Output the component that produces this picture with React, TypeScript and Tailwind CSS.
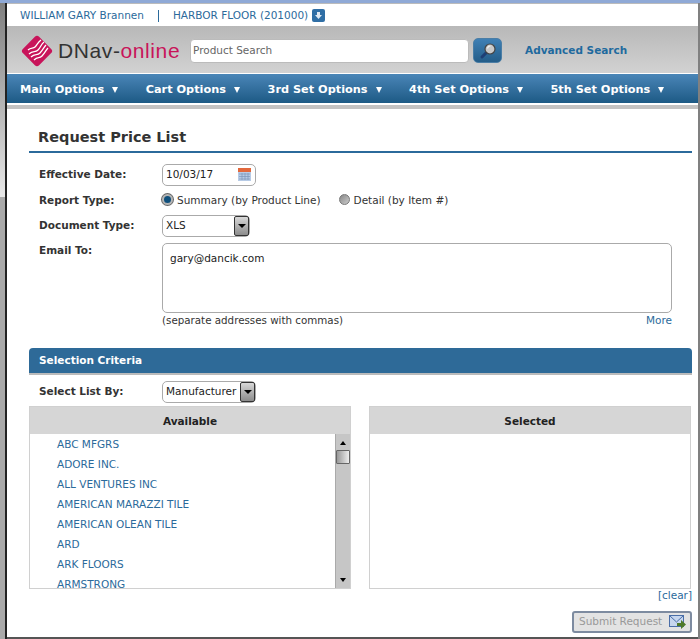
import React from "react";

const font = { fontFamily: '"DejaVu Sans", Verdana, sans-serif' };

function Caret() {
  return <span className="ml-[8px] inline-block w-0 h-0 border-l-[3px] border-r-[3px] border-t-[6px] border-l-transparent border-r-transparent border-t-white" />;
}

function SelectArrow() {
  return (
    <span className="w-[15px] h-[20px] flex items-center justify-center border border-[#333] rounded-[2px] bg-gradient-to-b from-[#d8d8d8] to-[#8c8c8c]">
      <span className="w-0 h-0 border-l-[4px] border-r-[4px] border-t-[4px] border-l-transparent border-r-transparent border-t-black" />
    </span>
  );
}

const names = ["ABC MFGRS", "ADORE INC.", "ALL VENTURES INC", "AMERICAN MARAZZI TILE", "AMERICAN OLEAN TILE", "ARD", "ARK FLOORS", "ARMSTRONG"];

export default function App() {
  return (
    <div style={font} className="w-[700px] h-[639px] overflow-hidden bg-white flex flex-col text-[10.5px] text-[#333]">
      <div className="h-[3px] shrink-0 bg-[#8fa9d6]" />
      <div className="flex-1 flex min-h-0">
        <div className="w-[7px] shrink-0 flex">
          <div className="w-[5px] flex flex-col">
            <div className="h-[194px] bg-gradient-to-b from-[#808080] to-[#e8e8e8]" />
            <div className="flex-1 bg-[#a9a9a9]" />
          </div>
          <div className="w-[2px] bg-[#222]" />
        </div>
        <div className="flex-1 min-w-0 flex flex-col">
          <div className="h-px shrink-0 bg-[#bbb]" />
          <div className="h-[22px] shrink-0 flex items-center pl-[13px] pt-[1px] text-[#2b6a9b] whitespace-nowrap">
            <span>WILLIAM GARY Brannen</span>
            <span className="w-px h-[12px] bg-[#2b6a9b] mx-[14px]" />
            <span>HARBOR FLOOR (201000)</span>
            <span className="ml-[4px] w-[13px] h-[13px] rounded-[2px] bg-[#2f6ea5] flex items-center justify-center">
              <svg width="9" height="9" viewBox="0 0 9 9"><path d="M3 1h3v3h2L4.500 8 1 4h2z" fill="#dfe9f3" /></svg>
            </span>
          </div>
          <div className="h-[47px] shrink-0 bg-gradient-to-b from-[#b8b8b8] to-[#d2d2d2] flex items-center pl-[13px] pt-[2px]">
            <svg width="34" height="34" viewBox="0 0 34 34" className="shrink-0">
              <defs>
                <clipPath id="logo-diamond">
                  <rect x="5.500" y="5.500" width="23" height="23" rx="3" transform="rotate(45 17 17)" />
                </clipPath>
              </defs>
              <rect x="5.500" y="5.500" width="23" height="23" rx="3" transform="rotate(45 17 17)" fill="#c8145a" />
              <g clipPath="url(#logo-diamond)" stroke="#fff" strokeWidth="1.300" fill="none">
                <path d="M8 16c3-3 5-1 7-3s3-5 6-7" />
                <path d="M9 20c4-4 6-1 9-4s3-6 6-8" />
                <path d="M11 23c4-4 6-1 9-4s4-6 6-8" />
                <path d="M14 26c4-4 5-1 8-4s4-6 6-8" />
              </g>
            </svg>
            <div className="ml-[4px] w-[129px] text-[21px] tracking-[0.6px] whitespace-nowrap" style={{ fontFamily: '"Liberation Sans", sans-serif' }}>
              <span className="text-[#333]">DNav-</span><span className="text-[#c8145a]">online</span>
            </div>
            <div className="ml-[3px] w-[279px] h-[24px] bg-white rounded-[4px] border border-[#bbb] flex items-center pl-[2px] text-[#666]">Product Search</div>
            <button className="ml-[4px] w-[29px] h-[25px] rounded-[5px] bg-gradient-to-b from-[#3f80b5] to-[#245d89] border border-[#4b7ea6] flex items-center justify-center">
              <svg width="20" height="20" viewBox="0 0 20 20">
                <path d="M8.500 11.500L4 16" stroke="#1d3f75" strokeWidth="3" strokeLinecap="round" />
                <circle cx="12" cy="8" r="5" fill="#c9c9c9" stroke="#444" strokeWidth="1.200" />
                <path d="M9.500 7.500a3 3 0 0 1 3-2.500" stroke="#f2f2f2" strokeWidth="1.200" fill="none" />
              </svg>
            </button>
            <span className="ml-[23px] font-bold text-[#1f6a9e]">Advanced Search</span>
          </div>
          <div className="h-px shrink-0 bg-white" />
          <div className="h-[29px] shrink-0 bg-gradient-to-b from-[#4a86b8] to-[#1c5a85] flex items-center pl-[13px] pt-[3px] text-white font-bold text-[11.3px] gap-[27.500px] whitespace-nowrap">
            <span className="flex items-center">Main Options<Caret /></span>
            <span className="flex items-center">Cart Options<Caret /></span>
            <span className="flex items-center">3rd Set Options<Caret /></span>
            <span className="flex items-center">4th Set Options<Caret /></span>
            <span className="flex items-center">5th Set Options<Caret /></span>
          </div>
          <div className="h-[2px] shrink-0 bg-white" />
          <div className="h-[4px] shrink-0 bg-[#c2c2c2]" />

          <div className="flex-1 min-h-0 pl-[22px] pr-[6px] flex flex-col">
            <h1 className="mt-[18px] h-[25px] pl-[9px] text-[14.5px] leading-[20px] font-bold text-[#333]">Request Price List</h1>
            <div className="h-[2px] bg-[#2b6a9b] -mt-[1px]" />
            <div className="mt-[10px] flex items-center h-[23px]">
              <label className="w-[133px] pl-[10px] font-bold">Effective Date:</label>
              <div className="w-[94px] h-[22px] border border-[#aaa] rounded-[5px] flex items-center justify-between pl-[3px] pr-[4px]">
                <span className="text-[#222]">10/03/17</span>
                <svg width="13" height="13" viewBox="0 0 13 13"><rect width="13" height="13" fill="#b7cbe6" /><rect width="13" height="4" fill="#e2683c" /><path d="M1 6h11M1 8.500h11M1 11h11M4 5v7M7 5v7M10 5v7" stroke="#7d96b8" strokeWidth="0.700" /></svg>
              </div>
            </div>
            <div className="mt-[5px] flex items-center h-[19px]">
              <label className="w-[133px] pl-[10px] font-bold">Report Type:</label>
              <span className="w-[11px] h-[11px] rounded-full bg-[#0f4f7c] border-2 border-[#b5b5b5] -mt-[2px] ring-1 ring-[#666]" />
              <span className="ml-[4px]">Summary (by Product Line)</span>
              <span className="ml-[18px] w-[11px] h-[11px] rounded-full bg-gradient-to-br from-[#888] to-[#ccc] border border-[#777] -mt-[2px]" />
              <span className="ml-[4px]">Detail (by Item #)</span>
            </div>
            <div className="mt-[5px] flex items-center h-[22px]">
              <label className="w-[133px] pl-[10px] font-bold">Document Type:</label>
              <div className="w-[88px] h-[22px] border border-[#aaa] rounded-[5px] flex items-center justify-between pl-[3px]">
                <span className="text-[#222]">XLS</span>
                <SelectArrow />
              </div>
            </div>
            <div className="mt-[6px] flex">
              <label className="w-[133px] pl-[10px] font-bold">Email To:</label>
              <div className="w-[510px] h-[70px] border border-[#aaa] rounded-[5px] pl-[7px] pt-[7px] text-[#222]">gary@dancik.com</div>
            </div>
            <div className="flex justify-between pl-[133px] pr-[20px] leading-[14px]">
              <span className="text-[10.300px]">(separate addresses with commas)</span>
              <span className="text-[#2b6a9b]">More</span>
            </div>
            <div className="mt-[21px] h-[27px] rounded-t-[4px] bg-[#2e6a98] border-b-2 border-[#bbb] flex items-center pl-[10px] font-bold text-white">Selection Criteria</div>
            <div className="mt-[6px] flex items-center h-[22px]">
              <label className="w-[133px] pl-[10px] font-bold">Select List By:</label>
              <div className="w-[94px] h-[22px] border border-[#aaa] rounded-[5px] flex items-center justify-between pl-[3px] text-[#222]">
                <span>Manufacturer</span>
                <SelectArrow />
              </div>
            </div>
            <div className="mt-[3px] flex gap-[18px]">
              <div className="w-[322px] h-[183px] border border-[#d0d0d0] flex flex-col">
                <div className="h-[27px] shrink-0 bg-[#d6d6d6] flex items-center justify-center pt-[3px] font-bold text-[#222]">Available</div>
                <div className="flex-1 min-h-0 flex">
                  <div className="flex-1 min-w-0 overflow-hidden pl-[27px] text-[#2b6a9b]">
                    {names.map((n) => <div key={n} className="h-[20px] leading-[20px]">{n}</div>)}
                  </div>
                  <div className="w-[15px] shrink-0 bg-[#c6c6c6] border-l border-[#aaa] flex flex-col items-center">
                    <span className="mt-[7px] w-0 h-0 border-l-[3px] border-r-[3px] border-b-[4px] border-l-transparent border-r-transparent border-b-black" />
                    <span className="mt-[5px] w-[14px] h-[14px] border border-[#666] rounded-[1px] bg-gradient-to-r from-[#999] to-[#eee]" />
                    <span className="mt-auto mb-[6px] w-0 h-0 border-l-[3px] border-r-[3px] border-t-[4px] border-l-transparent border-r-transparent border-t-black" />
                  </div>
                </div>
              </div>
              <div className="w-[322px] h-[183px] border border-[#d0d0d0] flex flex-col">
                <div className="h-[27px] shrink-0 bg-[#d6d6d6] flex items-center justify-center pt-[3px] font-bold text-[#222]">Selected</div>
              </div>
            </div>
            <div className="-mt-px text-right text-[#2b6a9b] h-[16px] leading-[14px]">[clear]</div>
            <div className="mt-[7px] flex justify-end">
              <div className="w-[120px] h-[22px] rounded-[3px] border-2 border-[#7d8ba0] bg-[#e3e3e3] flex items-center justify-between pl-[5px] pr-[4px] text-[#999]">
                <span>Submit Request</span>
                <svg width="17" height="14" viewBox="0 0 17 14"><rect x="0.500" y="0.500" width="14" height="11" fill="#c6d6ee" stroke="#4a6ea8" /><path d="M1 1l6.500 6L14 1" stroke="#4a6ea8" fill="none" /><path d="M8 8h4V5l5 4.500-5 4.500v-3H8z" fill="#4e7a2a" /></svg>
              </div>
            </div>
          </div>
          <div className="h-[2px] shrink-0 bg-[#555]" />
        </div>
        <div className="w-[2px] shrink-0 bg-[#808080]" />
      </div>
    </div>
  );
}
